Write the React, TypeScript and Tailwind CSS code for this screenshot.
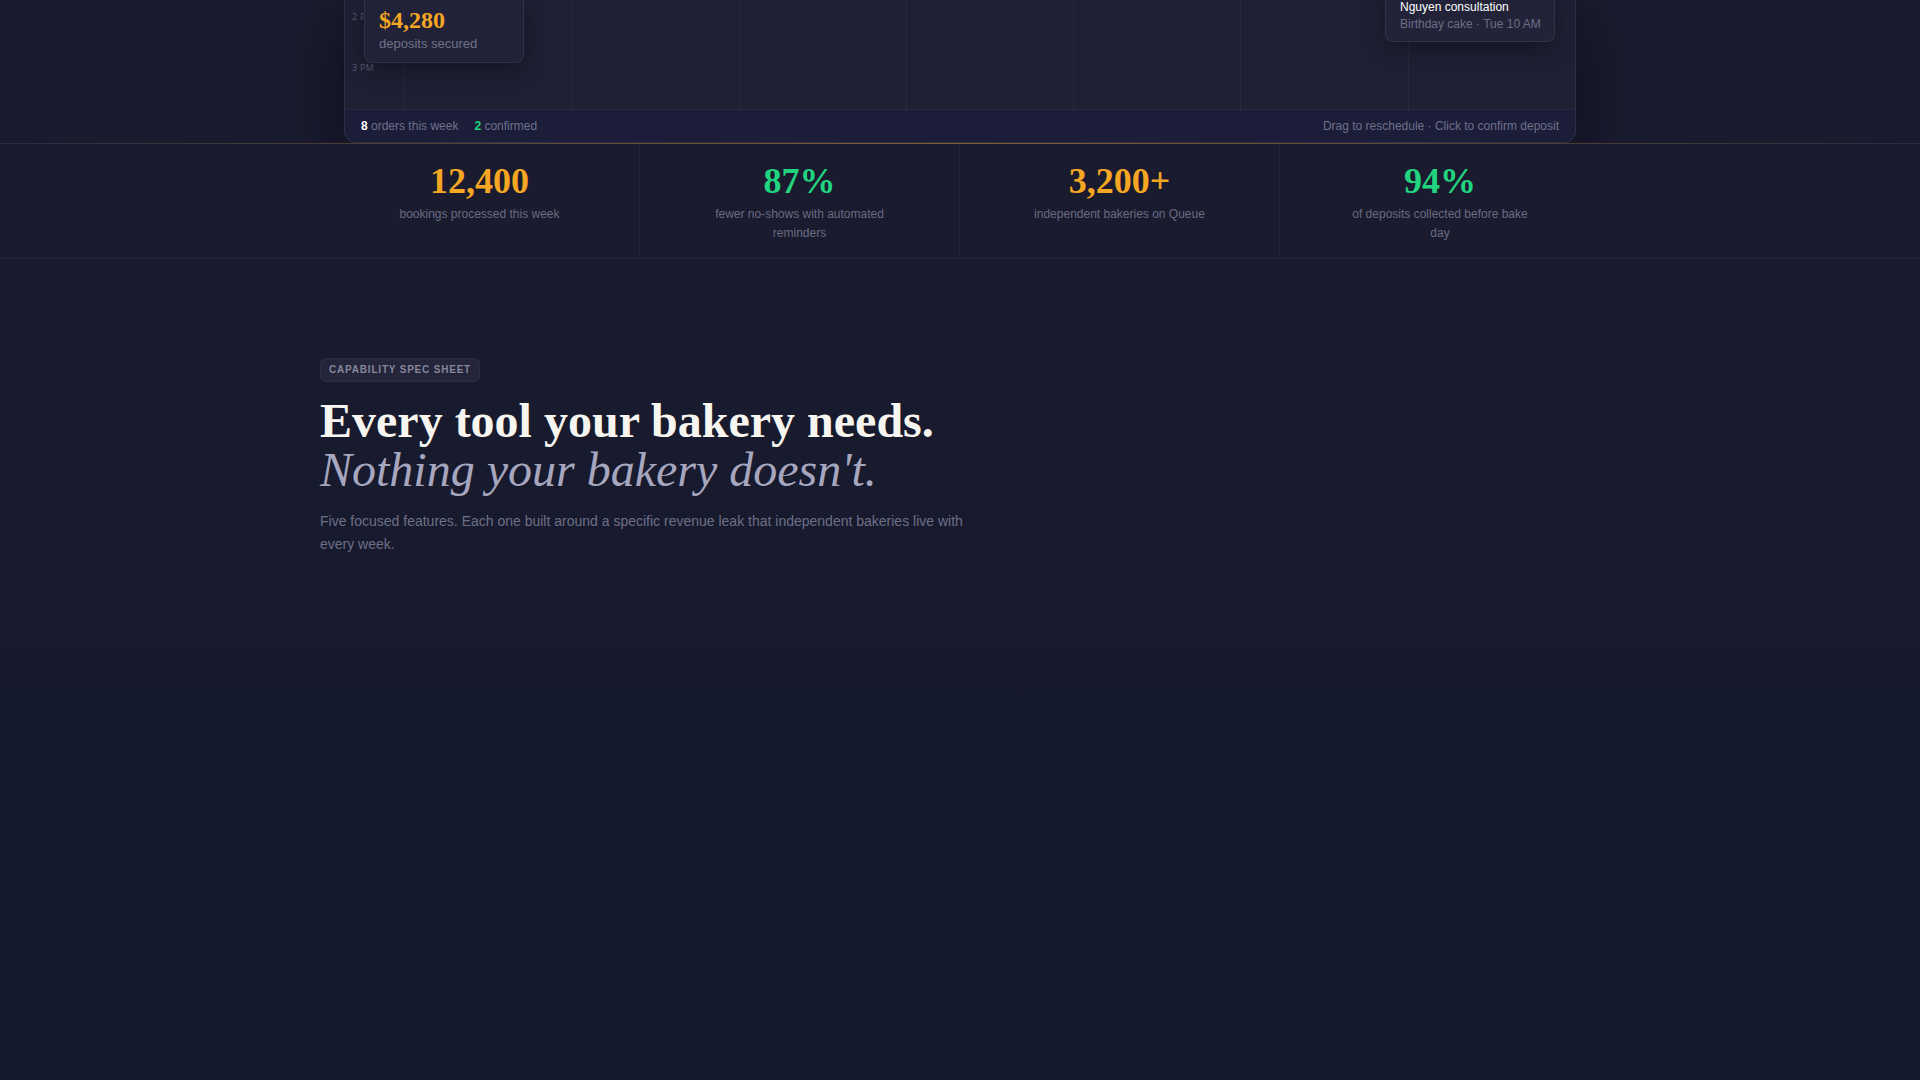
const sans = "font-['Liberation_Sans',Arial,sans-serif]";
const serif = "font-['Liberation_Serif','Times_New_Roman',serif]";

const stats = [
  { value: "12,400", label: "bookings processed this week", tone: "text-[#f5a623]" },
  { value: "87%", label: "fewer no-shows with automated reminders", tone: "text-[#22d47f]" },
  { value: "3,200+", label: "independent bakeries on Queue", tone: "text-[#f5a623]" },
  { value: "94%", label: "of deposits collected before bake day", tone: "text-[#22d47f]" },
];

function CalendarPanel() {
  return (
    <div className="mx-auto max-w-[1280px] px-6">
      <div className="rounded-b-xl border border-t-0 border-white/[0.07] bg-[#1f2034] shadow-[0_24px_60px_rgba(5,6,15,0.55)]">
        <div className="relative grid h-[109px] grid-cols-[59px_repeat(7,1fr)]">
          {/* time axis */}
          <div className="flex flex-col pt-[12px] pl-[7px] text-[9px] tracking-wide text-[#5a5c74]">
            <span className="h-[51px] leading-[10px]">2 PM</span>
            <span className="h-[51px] leading-[10px]">3 PM</span>
          </div>
          {Array.from({ length: 7 }).map((_, i) => (
            <div key={i} className="border-l border-white/[0.04]" />
          ))}

          {/* floating deposit card */}
          <div className="absolute bottom-[46px] left-[19px] w-[160px] rounded-lg border border-white/[0.07] bg-[#212238] px-[14px] pt-3 pb-[9px] shadow-[0_8px_24px_rgba(0,0,0,0.35)]">
            <div className={`${serif} text-[24px] font-bold leading-[30px] text-[#f5a623]`}>$4,280</div>
            <div className={`${sans} text-[13px] leading-[18px] text-[#6f7188]`}>deposits secured</div>
          </div>

          {/* order popover */}
          <div className="absolute right-[20px] bottom-[67px] w-[170px] rounded-lg border border-white/[0.07] bg-[#222338] px-[14px] pt-3 pb-[8px] shadow-[0_8px_24px_rgba(0,0,0,0.35)]">
            <div className={`${sans} whitespace-nowrap text-xs leading-[17px] text-white`}>Nguyen consultation</div>
            <div className={`${sans} whitespace-nowrap text-xs leading-[17px] text-[#6c6e86]`}>Birthday cake · Tue 10 AM</div>
          </div>
        </div>

        <div className={`${sans} flex h-[33px] items-center justify-between rounded-b-xl border-t border-white/[0.05] bg-[#1c1d39] px-4 text-xs text-[#6f7189]`}>
          <div className="flex items-center gap-4">
            <span>
              <b className="text-white">8</b> orders this week
            </span>
            <span>
              <b className="text-[#22d47f]">2</b> confirmed
            </span>
          </div>
          <span>Drag to reschedule · Click to confirm deposit</span>
        </div>
      </div>
    </div>
  );
}

function StatsBand() {
  return (
    <div className="relative border-b border-white/[0.05] bg-[#1a1b2e]">
      <div className="absolute inset-x-0 top-0 h-px bg-gradient-to-r from-white/[0.07] via-[#b07e32]/70 to-white/[0.07]" />
      <div className="mx-auto grid max-w-[1280px] grid-cols-4">
        {stats.map((s, i) => (
          <div
            key={s.value}
            className={`flex flex-col items-center pt-[19px] pb-[15px] text-center ${i < 3 ? "border-r border-white/[0.05]" : ""}`}
          >
            <div className={`${serif} text-[36px] font-bold leading-[38px] ${s.tone}`}>{s.value}</div>
            <p className={`${sans} mt-[5px] max-w-[180px] text-xs leading-[19px] text-[#696b83]`}>{s.label}</p>
          </div>
        ))}
      </div>
    </div>
  );
}

export default function App() {
  return (
    <div className="min-h-screen bg-[linear-gradient(180deg,#1a1b2e_0%,#181a2e_40%,#151a2d_100%)]">
      <CalendarPanel />
      <StatsBand />

      <section className="mx-auto max-w-[1280px] pt-[96px] pb-24">
        <span className={`${sans} inline-block rounded-md border border-white/[0.04] bg-[#24253a] px-[8px] py-[5px] text-[10px] font-bold uppercase leading-[12px] tracking-[0.08em] text-[#85879c]`}>
          Capability spec sheet
        </span>
        <h2 className={`${serif} mt-[14px] text-[48px] leading-[49px] text-[#f7f5f0]`}>
          <span className="block font-bold">Every tool your bakery needs.</span>
          <span className="block italic text-[#a7a6bf]">Nothing your bakery doesn't.</span>
        </h2>
        <p className={`${sans} mt-[16px] max-w-[672px] text-sm leading-[23px] text-[#6d6f87]`}>
          Five focused features. Each one built around a specific revenue leak that independent bakeries live with every week.
        </p>
      </section>
    </div>
  );
}
